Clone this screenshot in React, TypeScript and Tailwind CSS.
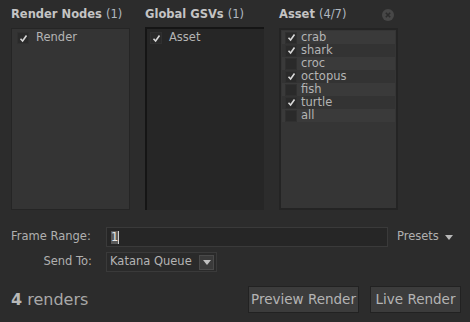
import React from "react";

const font = { fontFamily: '"DejaVu Sans", Verdana, sans-serif' };

function Check({ on }: { on: boolean }) {
  return (
    <div className="w-[12px] h-[12px] bg-[#2a2a2a] border border-[#303030] flex items-center justify-center shrink-0">
      {on && (
        <svg width="9" height="9" viewBox="0 0 9 9">
          <path d="M1.5 4.8 L3.6 7 L7.5 1.5" fill="none" stroke="#d8d8d8" strokeWidth="1.6" />
        </svg>
      )}
    </div>
  );
}

function Header({ title, count }: { title: string; count: string }) {
  return (
    <div className="h-[22px] flex items-center text-[11.5px] text-[#c4c4c4]">
      <span className="font-bold">{title}</span>
      <span className="ml-[4px] text-[#b0b8c0]">{count}</span>
    </div>
  );
}

export default function App() {
  const assets: [string, boolean][] = [
    ["crab", true],
    ["shark", true],
    ["croc", false],
    ["octopus", true],
    ["fish", false],
    ["turtle", true],
    ["all", false],
  ];
  return (
    <div style={font} className="w-[470px] h-[322px] bg-[#2c2c2c] text-[#b4b4b4] text-[11.5px] flex flex-col px-[11px] pt-[4px] overflow-hidden">
      <div className="flex gap-[15px] h-[206px]">
        <div className="w-[119px] flex flex-col">
          <Header title="Render Nodes" count="(1)" />
          <div className="flex-1 bg-[#343434] border border-[#252525] mt-[2px] p-[2px]">
            <div className="flex items-center gap-[7px] pl-[3px] h-[14px]">
              <Check on />
              <span>Render</span>
            </div>
          </div>
        </div>
        <div className="w-[119px] flex flex-col">
          <Header title="Global GSVs" count="(1)" />
          <div className="flex-1 bg-[#262626] border-l-2 border-t-2 border-[#151515] mt-[1px] p-[2px]">
            <div className="flex items-center gap-[7px] pl-[1px] h-[14px]">
              <Check on />
              <span>Asset</span>
            </div>
          </div>
        </div>
        <div className="w-[120px] flex flex-col">
          <div className="flex items-center justify-between pr-[5px]">
            <Header title="Asset" count="(4/7)" />
            <div className="w-[12px] h-[12px] rounded-full bg-[#474747] flex items-center justify-center">
              <svg width="6" height="6" viewBox="0 0 6 6">
                <path d="M0.8 0.8 L5.2 5.2 M5.2 0.8 L0.8 5.2" stroke="#2c2c2c" strokeWidth="1.6" />
              </svg>
            </div>
          </div>
          <div className="flex-1 bg-[#353535] border-2 border-[#242424] mt-[2px] px-[1px] pt-[1px] w-[119px]">
            {assets.map(([n, on], i) => (
              <div
                key={n}
                className={`flex items-center gap-[4px] pl-[3px] h-[13px] ${i % 2 === 0 ? "bg-[#3a3a3a]" : "bg-[#333333]"}`}
              >
                <Check on={on} />
                <span className="leading-[13px]">{n}</span>
              </div>
            ))}
          </div>
        </div>
      </div>

      <div className="flex items-center mt-[17px] h-[20px]">
        <div className="w-[95px] text-[#b0b0b0]">Frame Range:</div>
        <div className="w-[282px] h-[20px] bg-[#262626] border border-[#3a3a3a] flex items-center pl-[4px]">
          <span className="bg-[#5a5a5a] text-[#e8e8e8] leading-[13px]">1</span>
          <span className="w-[1px] h-[13px] bg-[#d0d0d0]" />
        </div>
        <div className="ml-[9px] flex items-center gap-[6px] text-[#b0b0b0]">
          <span>Presets</span>
          <svg width="8" height="5" viewBox="0 0 8 5">
            <path d="M0 0 H8 L4 5 Z" fill="#b8b8b8" />
          </svg>
        </div>
      </div>

      <div className="flex items-center mt-[5px] h-[20px]">
        <div className="w-[95px] text-right pr-[14px] text-[#b0b0b0]">Send To:</div>
        <div className="w-[111px] h-[20px] border border-[#3a3a3a] bg-[#2a2a2a] flex items-center justify-between pl-[3px] pr-[2px]">
          <span>Katana Queue</span>
          <div className="w-[15px] h-[15px] bg-[#3a3a3a] border border-[#4a4a4a] flex items-center justify-center">
            <svg width="8" height="5" viewBox="0 0 8 5">
              <path d="M0 0 H8 L4 5 Z" fill="#c0c0c0" />
            </svg>
          </div>
        </div>
      </div>

      <div className="flex items-center justify-between mt-[14px]">
        <div className="text-[16px] text-[#a8a8a8]">
          <span className="font-bold text-[#b8b8b8]">4</span> renders
        </div>
        <div className="flex gap-[11px] mr-[-2px]">
          <button className="h-[27px] w-[111px] bg-[#3c3c3c] border border-[#222] text-[13.5px] text-[#b4b4b4] flex items-center justify-center" style={font}>
            Preview Render
          </button>
          <button className="h-[27px] w-[91px] bg-[#3c3c3c] border border-[#222] text-[13.5px] text-[#b4b4b4] flex items-center justify-center" style={font}>
            Live Render
          </button>
        </div>
      </div>
    </div>
  );
}
